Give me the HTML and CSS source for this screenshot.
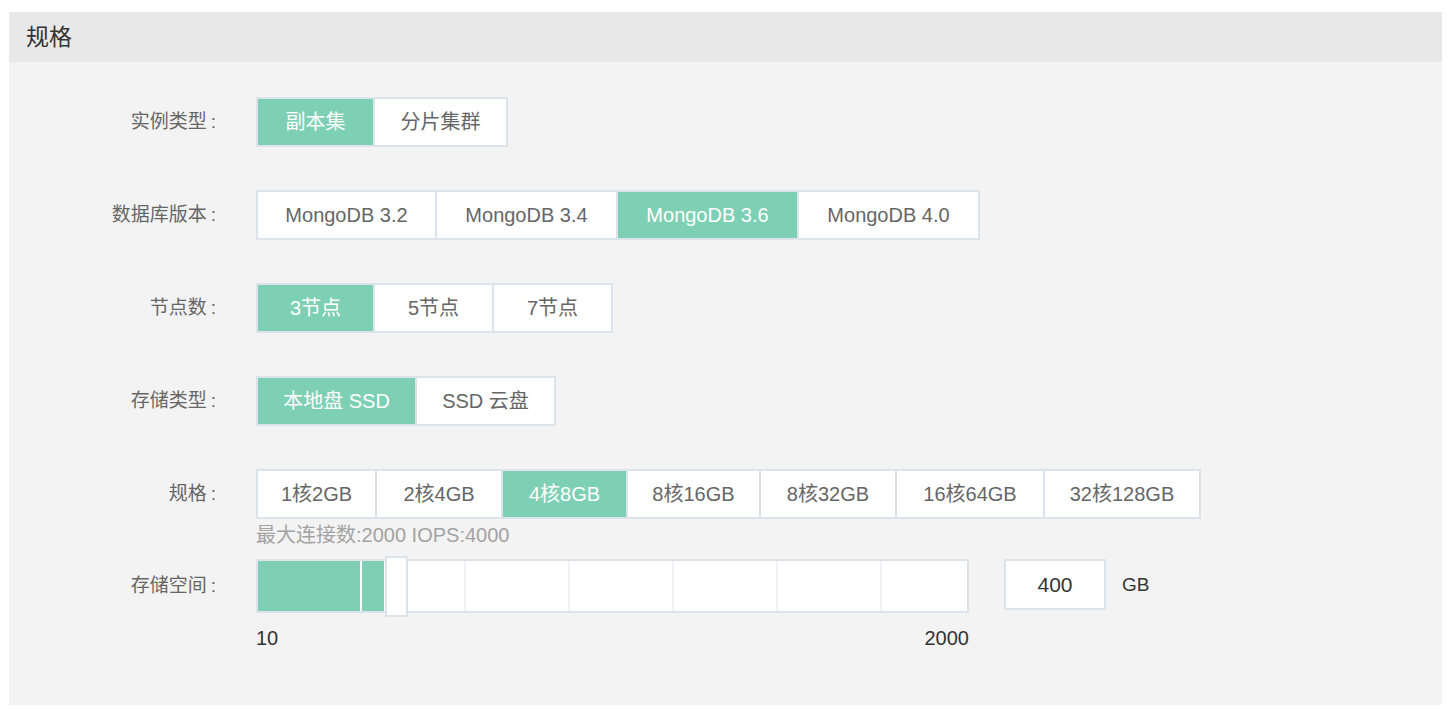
FILE: index.html
```html
<!DOCTYPE html>
<html lang="zh-CN">
<head>
<meta charset="utf-8">
<title>规格</title>
<link rel="stylesheet" href="styles.css">
</head>
<body>
<section class="panel">
  <header class="panel-hd">规格</header>
  <div class="panel-bd">
    <div class="form-row">
      <div class="label">实例类型<span class="colon">:</span></div>
      <div class="field">
        <div class="opts opts-type">
          <div class="opt active">副本集</div>
          <div class="opt">分片集群</div>
        </div>
      </div>
    </div>
    <div class="form-row">
      <div class="label">数据库版本<span class="colon">:</span></div>
      <div class="field">
        <div class="opts opts-ver">
          <div class="opt">MongoDB 3.2</div>
          <div class="opt">MongoDB 3.4</div>
          <div class="opt active">MongoDB 3.6</div>
          <div class="opt">MongoDB 4.0</div>
        </div>
      </div>
    </div>
    <div class="form-row">
      <div class="label">节点数<span class="colon">:</span></div>
      <div class="field">
        <div class="opts opts-node">
          <div class="opt active">3节点</div>
          <div class="opt">5节点</div>
          <div class="opt">7节点</div>
        </div>
      </div>
    </div>
    <div class="form-row">
      <div class="label">存储类型<span class="colon">:</span></div>
      <div class="field">
        <div class="opts opts-disk">
          <div class="opt active">本地盘 SSD</div>
          <div class="opt">SSD 云盘</div>
        </div>
      </div>
    </div>
    <div class="form-row row-spec">
      <div class="label">规格<span class="colon">:</span></div>
      <div class="field">
        <div class="opts opts-spec">
          <div class="opt">1核2GB</div>
          <div class="opt">2核4GB</div>
          <div class="opt active">4核8GB</div>
          <div class="opt">8核16GB</div>
          <div class="opt">8核32GB</div>
          <div class="opt">16核64GB</div>
          <div class="opt">32核128GB</div>
        </div>
        <div class="hint">最大连接数:2000 IOPS:4000</div>
      </div>
    </div>
    <div class="form-row row-size">
      <div class="label label-size">存储空间<span class="colon">:</span></div>
      <div class="field field-size">
        <div class="slider">
          <div class="track">
            <div class="segs">
              <div class="seg"></div><div class="seg"></div><div class="seg"></div><div class="seg"></div><div class="seg"></div><div class="seg"></div><div class="seg seg-last"></div>
            </div>
            <div class="fill" style="width:126px"></div>
            <div class="handle" style="left:127px"></div>
          </div>
          <div class="scale"><span>10</span><span>2000</span></div>
        </div>
        <div class="num">400</div>
        <div class="unit">GB</div>
      </div>
    </div>
  </div>
</section>
</body>
</html>
```

FILE: styles.css
```css
* { box-sizing: border-box; }

html, body {
  margin: 0;
  padding: 0;
  background: #ffffff;
}

body {
  font-family: "Liberation Sans", "Noto Sans CJK SC", sans-serif;
  color: #333;
}

.panel {
  margin: 12px 12px 0 9px;
  width: 1433px;
}

.panel-hd {
  height: 50px;
  line-height: 50px;
  padding-left: 17px;
  background: #e8e8e8;
  font-size: 23px;
  color: #333;
}

.panel-bd {
  background: #f3f3f3;
  height: 643px;
  padding-top: 35px;
}

.form-row {
  display: grid;
  grid-template-columns: 247px 1fr;
  margin-bottom: 43px;
}

.label {
  padding-right: 40px;
  text-align: right;
  font-size: 19px;
  line-height: 50px;
  color: #666;
}

.colon { margin-left: 4px; }

.field { display: flex; flex-direction: column; align-items: flex-start; }

.opts {
  display: grid;
  gap: 2px;
  padding: 2px;
  background: #dde3ea;
  height: 50px;
}

.opts-type { grid-template-columns: 115px 131px; }
.opts-ver  { grid-template-columns: 177px 179px 179px 179px; }
.opts-node { grid-template-columns: 115px 117px 117px; }
.opts-disk { grid-template-columns: 157px 137px; }
.opts-spec { grid-template-columns: 117px 124px 123px 131px 134px 146px 154px; }

.opt {
  background: #fff;
  color: #666;
  font-size: 20px;
  line-height: 46px;
  text-align: center;
  white-space: nowrap;
}

.opt.active {
  background: #7ed0b5;
  color: #fff;
}

.row-spec { margin-bottom: 0; }

.hint {
  margin-top: 4px;
  font-size: 20px;
  line-height: 24px;
  color: #a3a3a3;
}

.row-size { margin-top: 12px; margin-bottom: 0; }

.label-size { line-height: 54px; }

.field-size { flex-direction: row; align-items: flex-start; }

.slider { width: 713px; }

.track {
  position: relative;
  height: 54px;
  border: 2px solid #dde3ea;
  background: #fff;
}

.segs {
  display: flex;
  height: 50px;
  overflow: hidden;
}

.seg {
  flex: 0 0 104px;
  height: 50px;
  border-right: 2px solid #eff1f4;
}

.seg-last { flex-basis: 85px; border-right: 0; }

.fill {
  position: absolute;
  left: 0;
  top: 0;
  height: 50px;
  background: repeating-linear-gradient(to right, #7ed0b5 0 102px, #ffffff 102px 104px);
}

.handle {
  position: absolute;
  top: -5px;
  width: 23px;
  height: 61px;
  background: #fff;
  border: 2px solid #dde3ea;
}

.scale {
  display: flex;
  justify-content: space-between;
  margin-top: 13px;
  font-size: 20px;
  line-height: 24px;
  color: #333;
}

.num {
  margin-left: 35px;
  width: 102px;
  height: 51px;
  border: 2px solid #dde3ea;
  background: #fff;
  font-size: 21px;
  line-height: 47px;
  text-align: center;
  color: #333;
}

.unit {
  margin-left: 16px;
  font-size: 19px;
  line-height: 51px;
  color: #333;
}
```
